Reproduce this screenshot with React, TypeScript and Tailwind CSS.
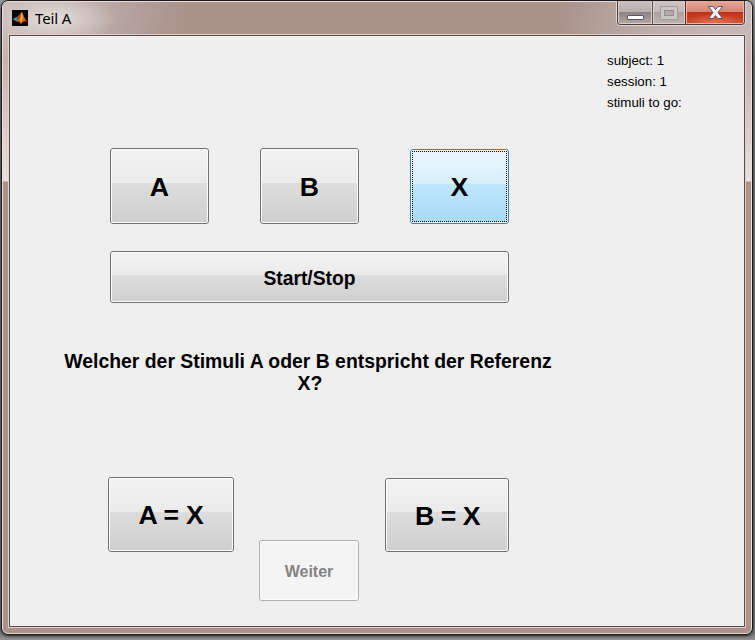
import type { ReactNode } from 'react';
import clsx from 'clsx';

function MatlabIcon() {
  return (
    <svg className="h-4 w-4" viewBox="0 0 16 16">
      <rect width="16" height="16" fill="#050505" />
      <path d="M0.8 9 L5 7 L7.4 5 L8.5 8 L6 11 L4.4 11.6 Z" fill="#4a9fb8" />
      <path d="M5 7 C7 6 8 3.5 9.5 1.8 L8.8 7.5 L6 11 L4.4 9.6 Z" fill="#86503a" />
      <path d="M9.7 1.6 C11.3 4 12.4 9 15.4 12.4 C12.7 10.6 11.2 10.8 8.8 14.6 C8.2 12.2 7.2 11 4.6 11.6 C7.5 10 8.3 5 9.7 1.6 Z" fill="#dc5c18" />
      <path d="M9.6 2.6 L11 7 L9.2 12.6 L8 10 Z" fill="#f9b142" />
    </svg>
  );
}

function CaptionButtons() {
  return (
    <div className="-mt-px mr-[5px] h-[25px] w-[130px] rounded-b-[5px] border border-t-0 border-[#e3d8d6]">
      <div className="flex h-6 overflow-hidden rounded-b-[4px] border border-t-0 border-[#463c3c]">
        <div className="flex w-[34px] justify-center border border-t-0 border-[#d9cfcd] bg-[linear-gradient(#cbc0bf_0,#b9adab_11px,#8f8180_11px,#b3a5a2_100%)]">
          <div className="mt-[14px] h-[5px] w-[17px] rounded-[1px] border border-[#53586a] bg-white" />
        </div>
        <div className="w-px bg-[#5f5352]" />
        <div className="flex w-[32px] justify-center border border-t-0 border-[#d9cfcd] bg-[linear-gradient(#cfc5c4_0,#c3b8b6_11px,#ad9f9d_11px,#bdb0ad_100%)]">
          <div className="mt-[5px] flex h-[14px] w-[18px] items-center justify-center rounded-[1px] border border-[#a39b9b] bg-[#cdc5c4]">
            <div className="h-[6px] w-[10px] border border-[#95898b] bg-[#b5aaa9]" />
          </div>
        </div>
        <div className="w-px bg-[#5c2921]" />
        <div className="flex flex-1 justify-center border border-t-0 border-[#e8b5a7] bg-[radial-gradient(ellipse_30px_9px_at_50%_100%,#e8714e_0%,transparent_100%),linear-gradient(#e5a99b_0,#d58372_11px,#bd3219_11px,#cb4a2e_100%)]">
          <svg className="mt-1 h-[15px] w-[17px]" viewBox="0 0 17 15">
            <path d="M1.5 1.5H6L8.5 4.5L11 1.5H15.5L11 7.5L15.5 13.5H11L8.5 10.5L6 13.5H1.5L6 7.5Z" fill="#f5f5f5" stroke="#555a6d" strokeLinejoin="round" />
          </svg>
        </div>
      </div>
    </div>
  );
}

type Variant = 'normal' | 'hot' | 'disabled';

function PushButton({ className, variant = 'normal', children }: { className: string; variant?: Variant; children: ReactNode }) {
  return (
    <button
      className={clsx(
        'shrink-0 rounded-[3px] border p-0 font-bold',
        variant === 'normal' && 'border-[#707070] text-black',
        variant === 'hot' && 'border-[#3c7fb1] text-black',
        variant === 'disabled' && 'border-[#adb2b5] text-[#838383]',
        className,
      )}
    >
      <span
        className={clsx(
          'flex h-full w-full items-center justify-center rounded-[2px] border',
          variant === 'normal' && 'border-[#fbfbfb] bg-[linear-gradient(#f2f2f2_0%,#ebebeb_46%,#dddddd_46%,#cfcfcf_100%)]',
          variant === 'hot' && 'border-[#f5fbfe] bg-[linear-gradient(#eaf6fd_0%,#d9f0fc_46%,#bee6fd_46%,#a7d9f5_100%)]',
          variant === 'disabled' && 'border-[#fcfcfc] bg-[#f4f4f4]',
        )}
      >
        {variant === 'hot' ? (
          <span className="flex h-full w-full items-center justify-center border border-dotted border-black">{children}</span>
        ) : (
          children
        )}
      </span>
    </button>
  );
}

export default function App() {
  return (
    <div className="h-[640px] w-[755px] overflow-hidden bg-[linear-gradient(#9a9a9a_0,#777777_60px,#777777_632px,#929292_640px)] pl-px font-['Liberation_Sans',Arial,sans-serif]">
      <div className="h-[635px] w-[752px] overflow-hidden rounded-[7px] border border-[#1d1618] shadow-[0_1px_3px_#222]">
        <div className="h-full rounded-[6px] border border-[#eadfdd] bg-[linear-gradient(#c8bab8_0,#c8b8b6_34px,#c4b3b1_60px,#e8e0df_179px,#a9938b_180px)]">
          <header className="flex h-8 justify-between bg-[radial-gradient(ellipse_65px_26px_at_50px_17px,#e6dedd_0%,#ddd3d1a0_50%,transparent_100%),linear-gradient(100deg,#c8bab8_0,#bfb0ad_75px,#a9938b_180px,#a9938b_550px,#bfb0ac_650px,#c8b8b6_100%)]">
            <div className="flex items-start pt-2 pl-[9px]">
              <MatlabIcon />
              <span className="ml-[7px] font-['Noto_Sans',sans-serif] text-[15px] leading-[17px] tracking-[-0.15px] text-black">Teil A</span>
            </div>
            <CaptionButtons />
          </header>
          <div className="ml-[5px] h-[594px] w-[738px] border border-[#dccfcc]">
            <main className="flex h-full justify-between border border-[#5b4b49] bg-[#efefef]">
              <section className="flex w-[560px] flex-col">
                <div className="mt-28 ml-[100px] flex h-[76px] items-end gap-[51px]">
                  <PushButton className="h-[76px] w-[99px] text-[26.67px]">
                    <span className="pt-[2px]">A</span>
                  </PushButton>
                  <PushButton className="h-[76px] w-[99px] text-[26.67px]">
                    <span className="pt-[2px]">B</span>
                  </PushButton>
                  <PushButton className="h-[75px] w-[99px] text-[26.67px]" variant="hot">X</PushButton>
                </div>
                <PushButton className="mt-[27px] ml-[100px] h-[52px] w-[399px] text-[19.3px]">
                  <span className="pt-[5px]">Start/Stop</span>
                </PushButton>
                <p className="mt-[47px] ml-[50px] w-[500px] text-center text-[19.4px] leading-[22px] font-bold whitespace-nowrap text-black">
                  <span className="-ml-1">Welcher der Stimuli A oder B entspricht der Referenz</span>
                  <br />
                  X?
                </p>
                <div className="mt-[83px] ml-[98px] flex items-start">
                  <PushButton className="h-[75px] w-[126px] text-[26.67px] tracking-[-0.3px]">A = X</PushButton>
                  <PushButton className="mt-[63px] ml-[25px] h-[61px] w-[100px] text-[16px]" variant="disabled">
                    <span className="pt-[2px]">Weiter</span>
                  </PushButton>
                  <PushButton className="mt-px ml-[26px] h-[74px] w-[124px] text-[26.67px] tracking-[-0.5px]">
                    <span className="pt-px pl-px">B = X</span>
                  </PushButton>
                </div>
              </section>
              <aside className="w-[137px] pt-[14px] text-[13.33px] leading-[21px] text-black">
                <div>subject: 1</div>
                <div>session: 1</div>
                <div>stimuli to go:</div>
              </aside>
            </main>
          </div>
        </div>
      </div>
    </div>
  );
}
